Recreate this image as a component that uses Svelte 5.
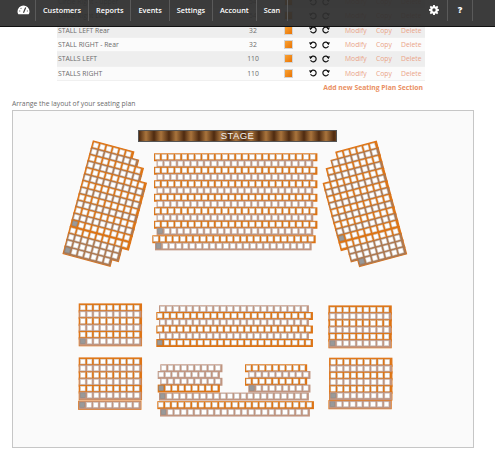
<script>
  const P = 6.75;
  const tableRows = [
    ['Circle Right - upper', 54],
    ['Circle Right Lower', 54],
    ['STALL LEFT Rear', 32],
    ['STALL RIGHT - Rear', 32],
    ['STALLS LEFT', 110],
    ['STALLS RIGHT', 110]
  ];
  const nav = ['Customers', 'Reports', 'Events', 'Settings', 'Account', 'Scan'];

  // one row of seats; x is the left edge, grey marks the first seat
  const row = (x, y, n, tone, grey = false) => ({ x, y, n, tone, grey });
  const stack = (x, y, n, count, greyAt = count - 1) =>
    Array.from({ length: count }, (_, i) => row(x, y + i * P, n, i % 2 ? 'tan' : 'org', i === greyAt));

  const centre = [
    ...Array.from({ length: 12 }, (_, i) =>
      row(i % 2 ? 156.6 : 154, 152.3 + i * P, i % 2 ? 23 : 24, i % 2 ? 'tan' : 'org', i === 11)),
    row(152.3, 234.3, 24, 'org'),
    row(155, 241.4, 23, 'tan', true)
  ];
  const midTop = Array.from({ length: 6 }, (_, i) =>
    row(i % 2 ? 156.3 : 159, 304.3 + i * 6.75, i % 2 ? 23 : 22, i % 2 ? 'org' : 'tan', i === 5));
  const midLow = [
    row(160.3, 363.3, 9, 'tan'), row(157.7, 370, 9, 'tan'), row(160.3, 376.8, 9, 'tan'), row(157.7, 383.6, 9, 'org', true),
    row(245, 363.3, 9, 'org'), row(248.3, 370, 9, 'tan'), row(245, 376.8, 9, 'org'), row(248.3, 383.6, 9, 'tan', true),
    row(159, 391.6, 22, 'tan', true), row(157.3, 400.2, 23, 'org'), row(160, 407.6, 22, 'tan', true)
  ];
  const straight = [...centre, ...midTop, ...midLow];
  const grids = [
    stack(79.3, 303, 9, 6), stack(79.3, 357, 9, 6), [row(78.7, 400.3, 9, 'tan', true)],
    stack(329, 305, 9, 6), stack(329.7, 357.3, 9, 6), [row(329, 399.7, 9, 'tan', true)]
  ];

  const upper = [6, 7, 8, 8, 9, 9, 9, 9, 9, 9, 9, 9, 9];
  const lower = [9, 8, 8, 7];
  const wingTone = (i) => (i % 2 ? 'dark' : 'org');
  const wingL = [
    ...upper.map((n, i) => row(0, i * P, n, wingTone(i), i === 12)),
    ...lower.map((n, i) => row(0, (13 + i) * P + 0.6, n, i === 0 ? 'org' : 'dark', i === 3))
  ];
  const wingR = [
    ...upper.map((n, i) => row(-n * P, i * P, n, wingTone(i), i === 12)),
    ...lower.map((n, i) => row(-n * P, (13 + i) * P + 0.6, n, i === 0 ? 'org' : 'dark', i === 3))
  ];
</script>

{#snippet seats(list, edge = false)}
  {#if edge}
    {#each list as r}
      <rect class="edge" x={r.x} y={r.y} width={r.n * P + 1.4} height={P + 1.2} />
    {/each}
  {/if}
  {#each list as r}
    <rect class="band {r.tone}" x={r.x} y={r.y} width={r.n * P + 1.4} height={P + 1.2} />
    {#each Array(r.n) as _, i}
      <rect class="seat" class:grey={r.grey && i === 0} x={r.x + 1.2 + i * P} y={r.y + 1.2} width="4.6" height="4.7" />
    {/each}
  {/each}
{/snippet}

{#snippet turn(flip)}
  <svg class="turn" class:flip viewBox="0 0 10 10" aria-hidden="true">
    <path d="M2.1 3.4A3.6 3.6 0 1 1 2 6.4" />
    <path class="head" d="M0 1.6 4.4 2.2 1.7 5.4Z" />
  </svg>
{/snippet}

<div class="page">
  <div class="table">
    {#each tableRows as [name, count], i}
      <div class="tr" class:alt={i % 2 === 0}>
        <span class="name">{name}</span>
        <span class="count">{count}</span>
        <span class="swatch"></span>
        <span class="turns">{@render turn(false)}{@render turn(true)}</span>
        <span class="link modify">Modify</span>
        <span class="link copy">Copy</span>
        <span class="link">Delete</span>
      </div>
    {/each}
    <div class="add">Add new Seating Plan Section</div>
  </div>

  <p class="label">Arrange the layout of your seating plan</p>

  <div class="panel">
    <div class="stage">STAGE</div>
    <svg class="plan" viewBox="0 0 495 450" width="495" height="450" aria-hidden="true">
      {@render seats(straight)}
      {#each grids as grid}
        {@render seats(grid, true)}
      {/each}
      <g transform="translate(93.3 140) rotate(15)">{@render seats(wingL, true)}</g>
      <g transform="translate(375 140.7) rotate(-15)">{@render seats(wingR, true)}</g>
    </svg>
  </div>
</div>

<header class="nav">
  <span class="item logo">
    <svg viewBox="0 0 14 11" width="13" height="10" aria-hidden="true">
      <path fill="#fff" fill-rule="evenodd" d="M7 .5A6.6 6.6 0 0 0 .4 7.1c0 1.2.3 2.3.9 3.2h11.4c.6-.9.9-2 .9-3.2A6.6 6.6 0 0 0 7 .5Z" />
      <path stroke="#3a3a3a" stroke-width="1.3" d="M7 8.6 9.4 2.8M2.4 6.6h1M10.7 6.6h1M4 3.4l.6.7" fill="none" />
    </svg>
  </span>
  {#each nav as item}
    <span class="item">{item}</span>
  {/each}
  <span class="right first">
    <svg viewBox="0 0 12 12" width="10" height="10" aria-hidden="true">
      <path fill="#fff" fill-rule="evenodd" d="M5 0h2l.3 1.6 1 .4L9.7 1l1.4 1.4-1 1.4.4 1 1.5.2v2l-1.5.3-.4 1 1 1.3-1.4 1.4-1.4-1-1 .4L7 12H5l-.3-1.6-1-.4-1.4 1L.9 9.6l1-1.3-.4-1L0 7V5l1.5-.2.4-1-1-1.4L2.3 1l1.4 1 1-.4ZM6 4a2 2 0 1 0 0 4 2 2 0 0 0 0-4Z" />
    </svg>
  </span>
  <span class="right help">?</span>
</header>

<style>
  :global(body) {
    margin: 0;
    background: #fff;
    overflow: hidden;
    font-family: "Open Sans", "Liberation Sans", sans-serif;
  }
  .page {
    width: 495px;
    height: 450px;
    overflow: hidden;
    font-size: 6.8px;
    color: #6c6c6c;
  }
  .table {
    width: 368px;
    margin: -5px 0 0 57px;
  }
  .tr {
    display: grid;
    grid-template-columns: 171px 48px 31px 37px 31px 25px 24px;
    align-items: center;
    height: 14.33px;
    padding-left: 1px;
    box-sizing: border-box;
    background: #fbfbfb;
    border-bottom: 1px solid #f0f0f0;
  }
  .tr.alt {
    background: #eee;
  }
  .count {
    text-align: center;
  }
  .swatch {
    width: 9px;
    height: 9px;
    margin-left: 6.5px;
    background: linear-gradient(135deg, #f9a233, #e97405);
    border: 1px solid #d4d4d4;
    box-sizing: border-box;
  }
  .turns {
    display: flex;
    gap: 5px;
    padding-left: 1px;
  }
  .turn {
    width: 8px;
    height: 8px;
    overflow: visible;
  }
  .turn.flip {
    transform: scaleX(-1);
  }
  .turn path {
    fill: none;
    stroke: #111;
    stroke-width: 1.5;
  }
  .turn .head {
    fill: #111;
    stroke: none;
  }
  .link {
    color: #eaa488;
  }
  .add {
    text-align: right;
    font-weight: 700;
    color: #ea9063;
    padding: 1px 2px 0 0;
    line-height: 11px;
  }
  .label {
    margin: 5px 0 0 12px;
    line-height: 11px;
  }
  .panel {
    position: relative;
    width: 460px;
    height: 336px;
    margin: 1px 0 0 12px;
    background: #fafafa;
    border: 1px solid #c6c6c6;
  }
  .plan {
    position: absolute;
    left: -13px;
    top: -110px;
  }
  .stage {
    position: absolute;
    left: 125px;
    top: 19px;
    width: 199px;
    height: 12px;
    box-sizing: border-box;
    border: 1px solid #555;
    background: repeating-linear-gradient(90deg, #4e2a10 0, #a9743c 7px, #4e2a10 15px);
    color: #f2f2f2;
    font: 9.5px/10px "Liberation Sans", sans-serif;
    letter-spacing: 0.4px;
    text-align: center;
  }
  .band {
    stroke: none;
  }
  .edge {
    fill: none;
    stroke: #e0761a;
    stroke-width: 1.2;
  }
  .org {
    fill: #dd7414;
  }
  .tan {
    fill: #c09580;
  }
  .dark {
    fill: #ad7850;
  }
  .seat {
    fill: #fff;
    stroke: #cfcfcf;
    stroke-width: 0.5;
  }
  .seat.grey {
    fill: #999;
    stroke: #8a8a8a;
  }
  .nav {
    position: absolute;
    left: 0;
    top: 0;
    width: 495px;
    height: 27px;
    box-sizing: border-box;
    display: flex;
    align-items: flex-start;
    background: rgba(48, 48, 48, 0.94);
    border-bottom: 1px solid #111;
    color: #fff;
    font-size: 7.3px;
    font-weight: 600;
  }
  .item {
    height: 21px;
    line-height: 20px;
    padding: 0 7px;
    border-right: 1px solid #5a5a5a;
  }
  .logo {
    width: 36px;
    box-sizing: border-box;
    display: flex;
    justify-content: center;
    padding: 5px 0 0 11px;
  }
  .right {
    height: 21px;
    line-height: 20px;
    border-right: 1px solid #5a5a5a;
    text-align: center;
    width: 27px;
  }
  .right svg {
    margin-top: 5px;
  }
  .first {
    margin-left: auto;
  }
  .help {
    width: 24px;
    margin-right: 22px;
    font-weight: 800;
    font-size: 9px;
  }
</style>
